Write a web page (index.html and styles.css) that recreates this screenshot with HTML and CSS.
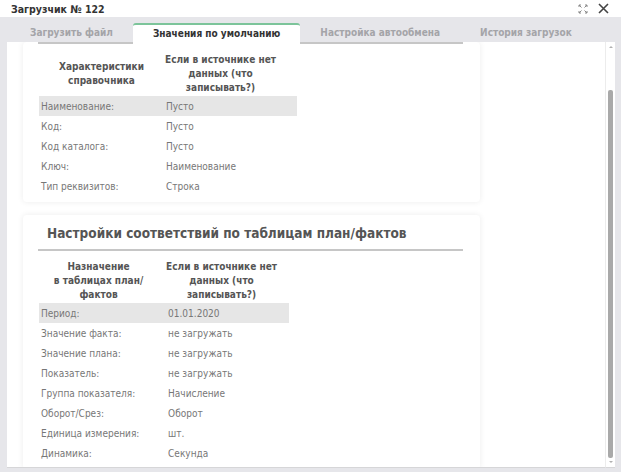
FILE: index.html
```html
<!DOCTYPE html>
<html lang="ru">
<head>
  <meta charset="UTF-8" />
  <title>Загрузчик № 122</title>
  <link rel="stylesheet" href="styles.css">
</head>
<body>
  <div class="window">
    <header class="titlebar">
      <span class="title">Загрузчик № 122</span>
      <div class="win-tools">
        <svg class="ico-expand" width="10" height="10" viewBox="0 0 10 10">
          <path d="M1 1l2.5 2.5M1 1h2M1 1v2M9 1L6.5 3.5M9 1H7M9 1v2M1 9l2.5-2.5M1 9h2M1 9V7M9 9L6.5 6.5M9 9H7M9 9V7" />
        </svg>
        <svg class="ico-close" width="11" height="11" viewBox="0 0 11 11">
          <path d="M1 1l9 9M10 1l-9 9" />
        </svg>
      </div>
    </header>

    <nav class="tabs">
      <a class="tab">Загрузить файл</a>
      <a class="tab active">Значения по умолчанию</a>
      <a class="tab">Настройка автообмена</a>
      <a class="tab">История загрузок</a>
    </nav>

    <div class="body">
      <div class="pane">
        <section class="card">
          <div class="card-rule"></div>
          <table class="map t1">
            <tr>
              <th class="c1">Характеристики<br>справочника</th>
              <th class="c2">Если в источнике нет<br>данных (что<br>записывать?)</th>
            </tr>
            <tr class="hl"><td>Наименование:</td><td>Пусто</td></tr>
            <tr><td>Код:</td><td>Пусто</td></tr>
            <tr><td>Код каталога:</td><td>Пусто</td></tr>
            <tr><td>Ключ:</td><td>Наименование</td></tr>
            <tr><td>Тип реквизитов:</td><td>Строка</td></tr>
          </table>
        </section>

        <section class="card">
          <h2 class="card-title">Настройки соответствий по таблицам план/фактов</h2>
          <table class="map t2">
            <tr>
              <th class="c1">Назначение<br>в таблицах план/<br>фактов</th>
              <th class="c2">Если в источнике нет<br>данных (что<br>записывать?)</th>
            </tr>
            <tr class="hl"><td>Период:</td><td>01.01.2020</td></tr>
            <tr><td>Значение факта:</td><td>не загружать</td></tr>
            <tr><td>Значение плана:</td><td>не загружать</td></tr>
            <tr><td>Показатель:</td><td>не загружать</td></tr>
            <tr><td>Группа показателя:</td><td>Начисление</td></tr>
            <tr><td>Оборот/Срез:</td><td>Оборот</td></tr>
            <tr><td>Единица измерения:</td><td>шт.</td></tr>
            <tr><td>Динамика:</td><td>Секунда</td></tr>
          </table>
        </section>
      </div>

      <div class="scrollbar">
        <span class="arrow up"></span>
        <span class="thumb"></span>
        <span class="arrow down"></span>
      </div>
    </div>
  </div>
</body>
</html>
```

FILE: styles.css
```css
html, body { margin: 0; padding: 0; background: #fff; }
body { font-family: "DejaVu Sans Condensed", "DejaVu Sans", sans-serif; font-stretch: condensed; color: #777; overflow: hidden; }

.window { width: 621px; height: 472px; display: flex; flex-direction: column; background: #fff; }

/* title bar */
.titlebar { height: 17px; display: flex; align-items: center; justify-content: space-between; padding: 0 12px 0 11px; }
.title { font-size: 10.5px; font-weight: bold; color: #333; }
.win-tools { display: flex; align-items: center; gap: 10px; }
.ico-expand path { stroke: #888; stroke-width: 1; fill: none; }
.ico-close path { stroke: #444; stroke-width: 1.6; fill: none; }

/* tabs */
.tabs { height: 25px; display: flex; align-items: flex-end; padding-left: 10px; background: #e6e6ea; }
.tab { height: 19px; padding: 2px 20px 0; display: flex; align-items: center; justify-content: center; font-size: 10px; font-weight: bold; color: #a4a4a8; }
.tab.active { height: 17px; margin-bottom: -2px; padding: 0 20px 2px; background: #fff; color: #333; border-top: 2px solid #7cc49a; border-radius: 3px 3px 0 0; position: relative; z-index: 2; }

/* body + pane */
.body { flex: 1; display: flex; background: #e6e6ea; padding: 0 6px 4px 7px; min-height: 0; }
.pane { flex: 1; background: #fff; overflow: hidden; padding-left: 16px; border-bottom: 1px solid #d6d6d8; }

.card { width: 457px; background: #fff; border-radius: 4px; box-shadow: 0 0 6px rgba(0, 0, 0, 0.08); padding-bottom: 6px; margin-bottom: 13px; }
.card-rule { height: 2px; margin: 0 17px 0 15px; background: #c6c6c6; }
.card-title { margin: 0 17px 0 15px; padding: 9px 0 7px 9px; font-size: 13.5px; line-height: 18px; font-weight: bold; color: #555; border-bottom: 2px solid #c6c6c6; }

.map { margin: 9px 0 0 16px; border-collapse: collapse; font-size: 10px; }
.map th { font-weight: bold; color: #555; line-height: 14px; text-align: center; vertical-align: middle; padding: 0 0 1px; }
.map td { height: 20px; padding: 0 0 0 2px; white-space: nowrap; }
.map tr.hl td { background: #e6e6e6; }
.t1 { width: 258px; }
.t1 .c1 { width: 125px; }
.t1 .c2 { padding-right: 20px; }
.t2 { width: 250px; }
.t2 .c1 { width: 121px; padding-right: 8px; }
.t2 .c2 { padding-right: 12px; white-space: nowrap; }

/* scrollbar */
.scrollbar { width: 9px; background: #fff; border-left: 1px solid #ececec; border-bottom: 1px solid #d6d6d8; display: flex; flex-direction: column; align-items: center; }
.thumb { width: 5px; flex: 1; margin: 42px 0 3px; background: #a9a9a9; border-radius: 2px; }
.arrow { width: 0; height: 0; border-left: 2px solid transparent; border-right: 2px solid transparent; }
.arrow.up { margin-top: 4px; border-bottom: 2px solid #b0b0b0; }
.arrow.down { margin-bottom: 4px; border-top: 2px solid #b0b0b0; }
```
